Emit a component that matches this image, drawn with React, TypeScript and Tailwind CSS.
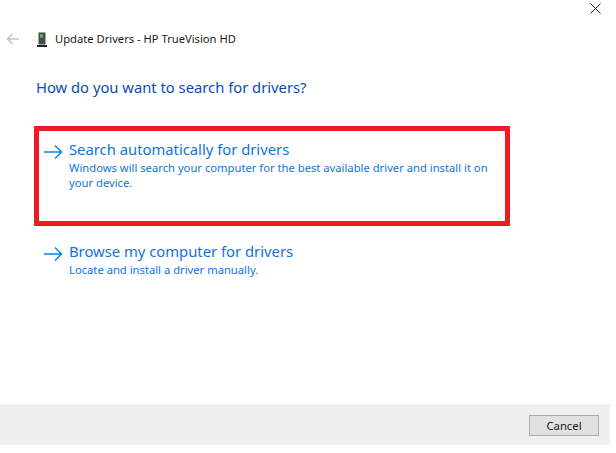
import React from "react";

const Arrow = () => (
  <svg width="19" height="16" viewBox="0 0 19 16" fill="none" stroke="#0a84e6" strokeWidth="1.5" className="shrink-0">
    <path d="M0 8H17.5M11 1.5L17.5 8L11 14.5" />
  </svg>
);

function Option({ title, desc }: { title: string; desc: React.ReactNode }) {
  return (
    <div className="flex items-start">
      <div className="w-[25px] pt-[6px] shrink-0"><Arrow /></div>
      <div>
        <div className="text-[14.8px] leading-[22px] text-[#0f74dc]">{title}</div>
        <div className="text-[11.23px] leading-[15px] text-[#0f74dc]">{desc}</div>
      </div>
    </div>
  );
}

export default function App() {
  return (
    <div className="w-[616px] h-[453px] bg-white font-['Noto_Sans','Open_Sans',sans-serif] flex flex-col">
      <div className="w-[610px] h-[445px] flex flex-col">
        <div className="flex justify-end h-[14px] pr-[9px]">
          <svg width="11" height="11" viewBox="0 0 11 11" stroke="#222" strokeWidth="1" className="mt-[3px]">
            <path d="M0.5 0.5L10.5 10.5M10.5 0.5L0.5 10.5" />
          </svg>
        </div>
        <div className="flex items-center h-[50px] pl-[6px]">
          <svg width="13" height="12" viewBox="0 0 13 12" fill="none" stroke="#c4c4c4" strokeWidth="1.5">
            <path d="M13 6H1.5M6.5 1L1.5 6L6.5 11" />
          </svg>
          <svg width="10" height="15" viewBox="0 0 10 15" className="ml-[18px]">
            <rect x="1.5" y="0.5" width="7" height="12" fill="#4b4b4b" />
            <rect x="3" y="2.5" width="3" height="3" fill="#2fd84a" />
            <rect x="0" y="13" width="10" height="2" fill="#222" />
          </svg>
          <span className="ml-[8px] text-[11.2px] text-[#1a1a1a]">Update Drivers - HP TrueVision HD</span>
        </div>
        <div className="pl-[36px] mt-[11px] text-[14.77px] leading-[24px] text-[#0a4bb8]">
          How do you want to search for drivers?
        </div>
        <div className="ml-[34px] mt-[27px] w-[476px] h-[100px] border-[5px] border-[#ed1c24] pl-[5px] pt-[7px]">
          <Option
            title="Search automatically for drivers"
            desc={<>Windows will search your computer for the best available driver and install it on<br />your device.</>}
          />
        </div>
        <div className="ml-[44px] mt-[14px]">
          <Option title="Browse my computer for drivers" desc="Locate and install a driver manually." />
        </div>
        <div className="mt-auto h-[40px] bg-[#f0f0f0] border-t border-[#e6e6e6] flex items-center justify-end pr-[11px]">
          <button className="w-[70px] h-[21px] bg-[#e1e1e1] border border-[#adadad] text-[11.3px] leading-none text-[#1a1a1a]">
            Cancel
          </button>
        </div>
      </div>
    </div>
  );
}
